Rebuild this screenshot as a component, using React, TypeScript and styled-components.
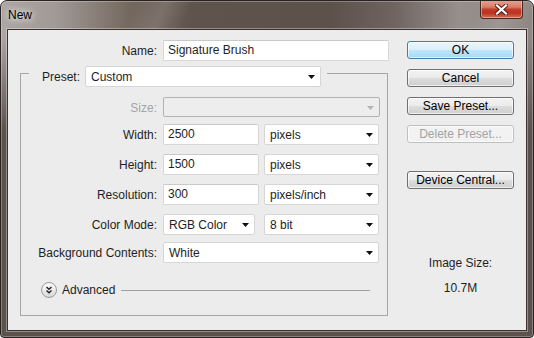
import React from "react";
import styled, { createGlobalStyle } from "styled-components";

const GlobalStyle = createGlobalStyle`
  html, body { margin: 0; padding: 0; background: #ffffff; }
  body { font-family: "Liberation Sans", Arial, sans-serif; font-size: 12px; color: #1e1e1e; }
  * { box-sizing: border-box; }
`;

const Window = styled.div`
  width: 534px;
  height: 338px;
  border: 1px solid #2b2321;
  border-radius: 7px 7px 4px 4px;
  padding: 0 6px 6px 6px;
  display: flex;
  flex-direction: column;
  overflow: hidden;
  box-shadow: inset 0 0 0 1px rgba(255, 255, 255, 0.28);
  background:
    linear-gradient(to bottom, rgba(93, 81, 76, 0) 0px, rgba(93, 81, 76, 0) 36px, #5d514c 130px),
    linear-gradient(115deg, rgba(255,255,255,0) 20%, rgba(255,255,255,0.12) 24%, rgba(255,255,255,0) 28%, rgba(255,255,255,0) 70%, rgba(255,255,255,0.1) 74%, rgba(255,255,255,0) 78%),
    linear-gradient(to right, #aca6a4 0%, #a19a97 10%, #75695f 24%, #5f534e 36%, #5d514c 62%, #6f6460 74%, #978f8c 86%, #8f8784 100%);
`;

const TitleBar = styled.div`
  height: 28px;
  display: flex;
  align-items: flex-start;
  justify-content: space-between;
  padding-left: 1px;
`;

const Title = styled.span`
  margin-top: 6px;
  font-size: 12px;
  line-height: 16px;
  color: #000;
  text-shadow: 0 0 6px rgba(255, 255, 255, 0.95), 0 0 10px rgba(255, 255, 255, 0.7);
`;

const CloseButton = styled.div`
  width: 43px;
  height: 19px;
  margin-top: -1px;
  margin-right: 4px;
  border: 1px solid #4a2822;
  border-top: none;
  border-radius: 0 0 4px 4px;
  display: flex;
  align-items: center;
  justify-content: center;
  box-shadow: inset 0 0 0 1px rgba(255, 220, 210, 0.45);
  background: linear-gradient(
    to bottom,
    #e6a697 0%,
    #d87c68 40%,
    #c23d2a 52%,
    #b9321f 72%,
    #d4705a 100%
  );
`;

const Client = styled.div`
  flex: 1;
  display: flex;
  border: 1px solid #3a312e;
  box-shadow: 0 0 0 1px rgba(255, 255, 255, 0.35);
  background: #ececec;
  padding-top: 10px;
`;

const LeftCol = styled.div`
  width: 381px;
  display: flex;
  flex-direction: column;
`;

const NameRow = styled.div`
  display: grid;
  grid-template-columns: 149px 226px;
  column-gap: 6px;
  align-items: center;
  height: 21px;
`;

const Label = styled.span<{ $disabled?: boolean }>`
  text-align: right;
  white-space: nowrap;
  font-size: 12px;
  color: ${(p) => (p.$disabled ? "#a4a4a4" : "#1e1e1e")};
`;

const GridLabel = styled(Label)`
  align-self: stretch;
  display: flex;
  align-items: center;
  justify-content: flex-end;
  height: 21px;
`;

const TextField = styled.input<{ $w: number }>`
  width: ${(p) => p.$w}px;
  height: 21px;
  margin: 0;
  padding: 0 0 1px 4px;
  border: 1px solid #d6d6d6;
  border-top-color: #c9c9c9;
  border-radius: 2px;
  background: #ffffff;
  font-family: "Liberation Sans", Arial, sans-serif;
  font-size: 12px;
  color: #1e1e1e;
  outline: none;
`;

const Select = styled.div<{ $w: number; $h?: number; $disabled?: boolean }>`
  width: ${(p) => p.$w}px;
  height: ${(p) => p.$h ?? 21}px;
  display: flex;
  align-items: center;
  justify-content: space-between;
  padding: 1px 5px 0 5px;
  border: 1px solid ${(p) => (p.$disabled ? "#b2b2b2" : "#d6d6d6")};
  border-radius: 2px;
  background: ${(p) => (p.$disabled ? "#ededed" : "#ffffff")};
  color: #1e1e1e;
  font-size: 12px;
  white-space: nowrap;
`;

const Arrow = ({ color = "#111" }: { color?: string }) => (
  <svg width="7" height="4" viewBox="0 0 7 4">
    <path d="M0 0H7L3.5 4Z" fill={color} />
  </svg>
);

const GroupBox = styled.fieldset`
  margin: -1px 0 0 12px;
  width: 368px;
  min-width: 0;
  padding: 0 0 17px 8px;
  border: 1px solid #a6a6a6;
`;

const Legend = styled.legend`
  display: flex;
  align-items: center;
  gap: 5px;
  padding: 6px 6px 0 13px;
`;

const FormGrid = styled.div`
  margin-top: 10px;
  display: grid;
  grid-template-columns: 128px 216px;
  grid-template-rows: 27px 30px 30px 30px 28px 21px;
  column-gap: 6px;
  align-items: start;
`;

const ControlPair = styled.div`
  display: flex;
  justify-content: space-between;
  align-items: center;
`;

const AdvancedRow = styled.div`
  margin-top: 19px;
  padding-left: 12px;
  display: flex;
  align-items: center;
  height: 16px;
`;

const AdvancedText = styled.span`
  margin-left: 5px;
  font-size: 12px;
  color: #1e1e1e;
`;

const Rule = styled.div`
  flex: 1;
  height: 1px;
  margin: 1px 17px 0 6px;
  background: #a0a0a0;
`;

const RightCol = styled.div`
  width: 107px;
  margin-left: 18px;
  padding-top: 1px;
  display: flex;
  flex-direction: column;
  align-items: center;
`;

const Button = styled.button<{ $variant?: "default" | "primary" | "disabled"; $gapTop?: number }>`
  width: 107px;
  height: 18px;
  margin: ${(p) => p.$gapTop ?? 10}px 0 0 0;
  padding: 0;
  border-radius: 3px;
  font-family: "Liberation Sans", Arial, sans-serif;
  font-size: 12px;
  line-height: 15px;
  color: ${(p) => (p.$variant === "disabled" ? "#a3a3a3" : "#000")};
  border: 1px solid
    ${(p) => (p.$variant === "primary" ? "#3c7fb1" : p.$variant === "disabled" ? "#bcc0c2" : "#707070")};
  box-shadow: inset 0 0 0 1px rgba(255, 255, 255, 0.65);
  background: ${(p) =>
    p.$variant === "primary"
      ? "linear-gradient(to bottom, #eaf6fd 0%, #d9f0fc 48%, #bee6fd 52%, #a7d9f5 100%)"
      : p.$variant === "disabled"
      ? "#f2f2f2"
      : "linear-gradient(to bottom, #f3f3f3 0%, #ebebeb 48%, #dddddd 52%, #cfcfcf 100%)"};
`;

const InfoLabel = styled.div<{ $top: number }>`
  margin-top: ${(p) => p.$top}px;
  font-size: 12px;
  line-height: 14px;
  color: #1e1e1e;
  text-align: center;
`;

const AdvancedIcon = () => (
  <svg width="16" height="16" viewBox="0 0 16 16">
    <defs>
      <linearGradient id="advg" x1="0" y1="0" x2="0" y2="1">
        <stop offset="0" stopColor="#ffffff" />
        <stop offset="1" stopColor="#d6d6d6" />
      </linearGradient>
    </defs>
    <circle cx="8" cy="8" r="7.5" fill="url(#advg)" stroke="#9a9a9a" />
    <polyline points="5.5,5 8,7.3 10.5,5" fill="none" stroke="#222" strokeWidth="1.4" />
    <polyline points="5.5,8.5 8,10.8 10.5,8.5" fill="none" stroke="#222" strokeWidth="1.4" />
  </svg>
);

const CloseIcon = () => (
  <svg width="13" height="11" viewBox="0 0 13 11">
    <path d="M2 1.5L11 9.5M11 1.5L2 9.5" stroke="#4a1d16" strokeWidth="4" strokeLinecap="square" />
    <path d="M2 1.5L11 9.5M11 1.5L2 9.5" stroke="#ffffff" strokeWidth="2.2" strokeLinecap="square" />
  </svg>
);

export default function App() {
  return (
    <>
      <GlobalStyle />
      <Window>
        <TitleBar>
          <Title>New</Title>
          <CloseButton>
            <CloseIcon />
          </CloseButton>
        </TitleBar>
        <Client>
          <LeftCol>
            <NameRow>
              <Label>Name:</Label>
              <TextField $w={226} readOnly defaultValue="Signature Brush" />
            </NameRow>
            <GroupBox>
              <Legend>
                <Label>Preset:</Label>
                <Select $w={236}>
                  <span>Custom</span>
                  <Arrow />
                </Select>
              </Legend>
              <FormGrid>
                <GridLabel $disabled>Size:</GridLabel>
                <Select $w={217} $h={20} $disabled>
                  <span />
                  <Arrow color="#b4b4b4" />
                </Select>

                <GridLabel>Width:</GridLabel>
                <ControlPair>
                  <TextField $w={96} readOnly defaultValue="2500" />
                  <Select $w={115}>
                    <span>pixels</span>
                    <Arrow />
                  </Select>
                </ControlPair>

                <GridLabel>Height:</GridLabel>
                <ControlPair>
                  <TextField $w={96} readOnly defaultValue="1500" />
                  <Select $w={115}>
                    <span>pixels</span>
                    <Arrow />
                  </Select>
                </ControlPair>

                <GridLabel>Resolution:</GridLabel>
                <ControlPair>
                  <TextField $w={96} readOnly defaultValue="300" />
                  <Select $w={115}>
                    <span>pixels/inch</span>
                    <Arrow />
                  </Select>
                </ControlPair>

                <GridLabel>Color Mode:</GridLabel>
                <ControlPair>
                  <Select $w={92}>
                    <span>RGB Color</span>
                    <Arrow />
                  </Select>
                  <Select $w={115}>
                    <span>8 bit</span>
                    <Arrow />
                  </Select>
                </ControlPair>

                <GridLabel>Background Contents:</GridLabel>
                <Select $w={216}>
                  <span>White</span>
                  <Arrow />
                </Select>
              </FormGrid>
              <AdvancedRow>
                <AdvancedIcon />
                <AdvancedText>Advanced</AdvancedText>
                <Rule />
              </AdvancedRow>
            </GroupBox>
          </LeftCol>
          <RightCol>
            <Button $variant="primary" $gapTop={0}>OK</Button>
            <Button>Cancel</Button>
            <Button>Save Preset...</Button>
            <Button $variant="disabled">Delete Preset...</Button>
            <Button $gapTop={28}>Device Central...</Button>
            <InfoLabel $top={67}>Image Size:</InfoLabel>
            <InfoLabel $top={11}>10.7M</InfoLabel>
          </RightCol>
        </Client>
      </Window>
    </>
  );
}
